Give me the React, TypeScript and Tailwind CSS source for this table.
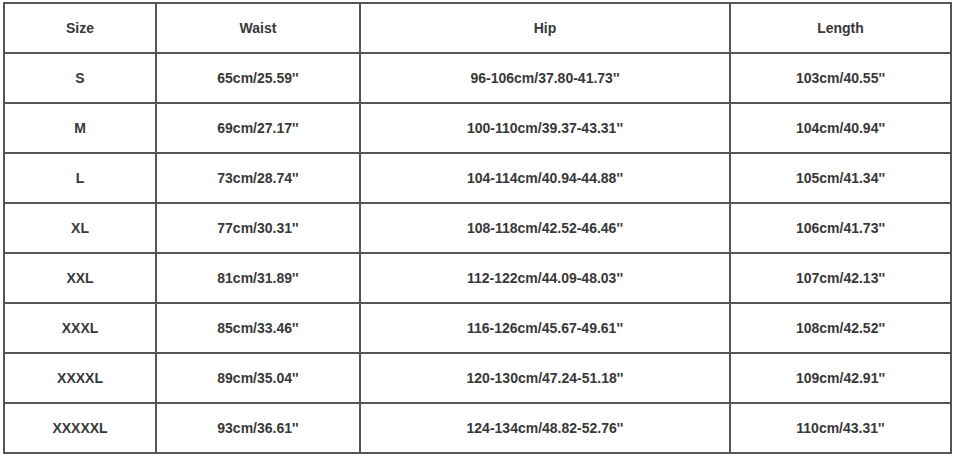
const headers = ['Size', 'Waist', 'Hip', 'Length'];

const rows = [
  ['S', '65cm/25.59\'\'', '96-106cm/37.80-41.73\'\'', '103cm/40.55\'\''],
  ['M', '69cm/27.17\'\'', '100-110cm/39.37-43.31\'\'', '104cm/40.94\'\''],
  ['L', '73cm/28.74\'\'', '104-114cm/40.94-44.88\'\'', '105cm/41.34\'\''],
  ['XL', '77cm/30.31\'\'', '108-118cm/42.52-46.46\'\'', '106cm/41.73\'\''],
  ['XXL', '81cm/31.89\'\'', '112-122cm/44.09-48.03\'\'', '107cm/42.13\'\''],
  ['XXXL', '85cm/33.46\'\'', '116-126cm/45.67-49.61\'\'', '108cm/42.52\'\''],
  ['XXXXL', '89cm/35.04\'\'', '120-130cm/47.24-51.18\'\'', '109cm/42.91\'\''],
  ['XXXXXL', '93cm/36.61\'\'', '124-134cm/48.82-52.76\'\'', '110cm/43.31\'\''],
];

function Cell({ children }: { children: React.ReactNode }) {
  return (
    <div className="flex items-center justify-center h-[50px] border-r-2 border-b-2 border-[#555] text-[14px] font-bold text-[#383838]">
      {children}
    </div>
  );
}

export default function App() {
  return (
    <div className="w-[956px] h-[456px] bg-white pl-[3px] pt-[2px]" style={{ fontFamily: '"Liberation Sans", Arial, sans-serif' }}>
      <div className="grid grid-cols-[152px_204px_370px_221px] w-fit border-l-2 border-t-2 border-[#555]">
        {headers.map((h) => (
          <Cell key={h}>{h}</Cell>
        ))}
        {rows.map((row) =>
          row.map((v, i) => <Cell key={row[0] + i}>{v}</Cell>)
        )}
      </div>
    </div>
  );
}
